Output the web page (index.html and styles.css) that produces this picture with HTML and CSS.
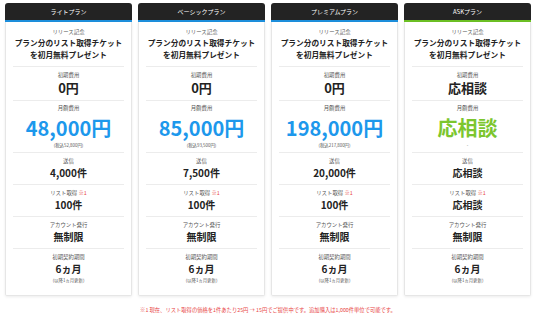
FILE: index.html
```html
<!DOCTYPE html>
<html lang="ja">
<head>
    <meta charset="UTF-8">
    <title>料金プラン</title>
    <link rel="stylesheet" href="styles.css">
</head>
<body>

    <div class="plans">
        <!-- ライト -->
        <div class="plan">
            <div class="plan-head">ライトプラン</div>
            <div class="plan-body">
                <div class="row intro">
                    <div class="label">リリース記念</div>
                    <div class="intro-text">プラン分のリスト取得チケット<br>を初月無料プレゼント</div>
                </div>
                <div class="row initial">
                    <div class="label">初期費用</div>
                    <div class="value big">0円</div>
                </div>
                <div class="row monthly">
                    <div class="label">月額費用</div>
                    <div class="price">48,000円</div>
                    <div class="note">(税込52,800円)</div>
                </div>
                <div class="row">
                    <div class="label">送信</div>
                    <div class="value">4,000件</div>
                </div>
                <div class="row">
                    <div class="label">リスト取得 <span class="mark">※1</span></div>
                    <div class="value">100件</div>
                </div>
                <div class="row">
                    <div class="label">アカウント発行</div>
                    <div class="value">無制限</div>
                </div>
                <div class="row contract">
                    <div class="label">初期契約期間</div>
                    <div class="value">6ヵ月</div>
                    <div class="note">(以降1ヵ月更新)</div>
                </div>
            </div>
        </div>

        <!-- ベーシック -->
        <div class="plan">
            <div class="plan-head">ベーシックプラン</div>
            <div class="plan-body">
                <div class="row intro">
                    <div class="label">リリース記念</div>
                    <div class="intro-text">プラン分のリスト取得チケット<br>を初月無料プレゼント</div>
                </div>
                <div class="row initial">
                    <div class="label">初期費用</div>
                    <div class="value big">0円</div>
                </div>
                <div class="row monthly">
                    <div class="label">月額費用</div>
                    <div class="price">85,000円</div>
                    <div class="note">(税込93,500円)</div>
                </div>
                <div class="row">
                    <div class="label">送信</div>
                    <div class="value">7,500件</div>
                </div>
                <div class="row">
                    <div class="label">リスト取得 <span class="mark">※1</span></div>
                    <div class="value">100件</div>
                </div>
                <div class="row">
                    <div class="label">アカウント発行</div>
                    <div class="value">無制限</div>
                </div>
                <div class="row contract">
                    <div class="label">初期契約期間</div>
                    <div class="value">6ヵ月</div>
                    <div class="note">(以降1ヵ月更新)</div>
                </div>
            </div>
        </div>

        <!-- プレミアム -->
        <div class="plan">
            <div class="plan-head">プレミアムプラン</div>
            <div class="plan-body">
                <div class="row intro">
                    <div class="label">リリース記念</div>
                    <div class="intro-text">プラン分のリスト取得チケット<br>を初月無料プレゼント</div>
                </div>
                <div class="row initial">
                    <div class="label">初期費用</div>
                    <div class="value big">0円</div>
                </div>
                <div class="row monthly">
                    <div class="label">月額費用</div>
                    <div class="price">198,000円</div>
                    <div class="note">(税込217,800円)</div>
                </div>
                <div class="row">
                    <div class="label">送信</div>
                    <div class="value">20,000件</div>
                </div>
                <div class="row">
                    <div class="label">リスト取得 <span class="mark">※1</span></div>
                    <div class="value">100件</div>
                </div>
                <div class="row">
                    <div class="label">アカウント発行</div>
                    <div class="value">無制限</div>
                </div>
                <div class="row contract">
                    <div class="label">初期契約期間</div>
                    <div class="value">6ヵ月</div>
                    <div class="note">(以降1ヵ月更新)</div>
                </div>
            </div>
        </div>

        <!-- ASK -->
        <div class="plan ask">
            <div class="plan-head">ASKプラン</div>
            <div class="plan-body">
                <div class="row intro">
                    <div class="label">リリース記念</div>
                    <div class="intro-text">プラン分のリスト取得チケット<br>を初月無料プレゼント</div>
                </div>
                <div class="row initial">
                    <div class="label">初期費用</div>
                    <div class="value big">応相談</div>
                </div>
                <div class="row monthly">
                    <div class="label">月額費用</div>
                    <div class="price">応相談</div>
                    <div class="note">-</div>
                </div>
                <div class="row">
                    <div class="label">送信</div>
                    <div class="value">応相談</div>
                </div>
                <div class="row">
                    <div class="label">リスト取得 <span class="mark">※1</span></div>
                    <div class="value">応相談</div>
                </div>
                <div class="row">
                    <div class="label">アカウント発行</div>
                    <div class="value">無制限</div>
                </div>
                <div class="row contract">
                    <div class="label">初期契約期間</div>
                    <div class="value">6ヵ月</div>
                    <div class="note">(以降1ヵ月更新)</div>
                </div>
            </div>
        </div>
    </div>

    <p class="footnote">※1 現在、リスト取得の価格を1件あたり25円 → 15円でご提供中です。追加購入は1,000件単位で可能です。</p>

</body>
</html>
```

FILE: styles.css
```css
* {
    box-sizing: border-box;
    margin: 0;
    padding: 0;
}

body {
    width: 536px;
    height: 320px;
    padding: 3px 5px 0 5px;
    background: #fff;
    color: #222;
    font-family: "Noto Sans CJK JP", "Noto Sans", sans-serif;
    overflow: hidden;
}

.plans {
    display: grid;
    grid-template-columns: repeat(4, 127px);
    gap: 6px;
}

.plan {
    display: flex;
    flex-direction: column;
}

/* Dark header with coloured underline */
.plan-head {
    height: 19px;
    background: #232323;
    border-bottom: 2px solid #1d8fdc;
    border-radius: 3px 3px 0 0;
    color: #fff;
    font-size: 6px;
    line-height: 17px;
    text-align: center;
}

.ask .plan-head {
    border-bottom-color: #6cc024;
}

.plan-body {
    height: 274px;
    padding: 0 7px;
    border: 1px solid #e6e6e6;
    border-top: none;
    border-radius: 0 0 2px 2px;
    box-shadow: 0 1px 3px rgba(0, 0, 0, 0.08);
    text-align: center;
}

.row {
    padding: 3px 0 4px;
    border-top: 1px solid #ececec;
}

.row.intro {
    padding: 5px 0 5px;
    border-top: none;
}

.row.monthly {
    padding: 2px 0 4px;
}

.row.contract {
    padding: 3px 0 0;
}

.label {
    font-size: 5.4px;
    line-height: 10px;
    color: #555;
}

.mark {
    color: #e84545;
}

.intro-text {
    font-size: 7.7px;
    line-height: 12px;
    font-weight: bold;
    color: #222;
    white-space: nowrap;
}

.value {
    font-size: 10px;
    line-height: 14px;
    font-weight: bold;
    color: #222;
}

.value.big {
    font-size: 13px;
    line-height: 16px;
}

.price {
    font-size: 20px;
    line-height: 29px;
    font-weight: bold;
    color: #1d98ec;
}

.ask .price {
    color: #7cc62e;
}

.monthly .note {
    line-height: 6px;
}

.note {
    font-size: 4.4px;
    line-height: 8px;
    color: #555;
}

.footnote {
    margin-top: 10px;
    font-size: 5.3px;
    line-height: 8px;
    color: #e84545;
    text-align: center;
}
```
